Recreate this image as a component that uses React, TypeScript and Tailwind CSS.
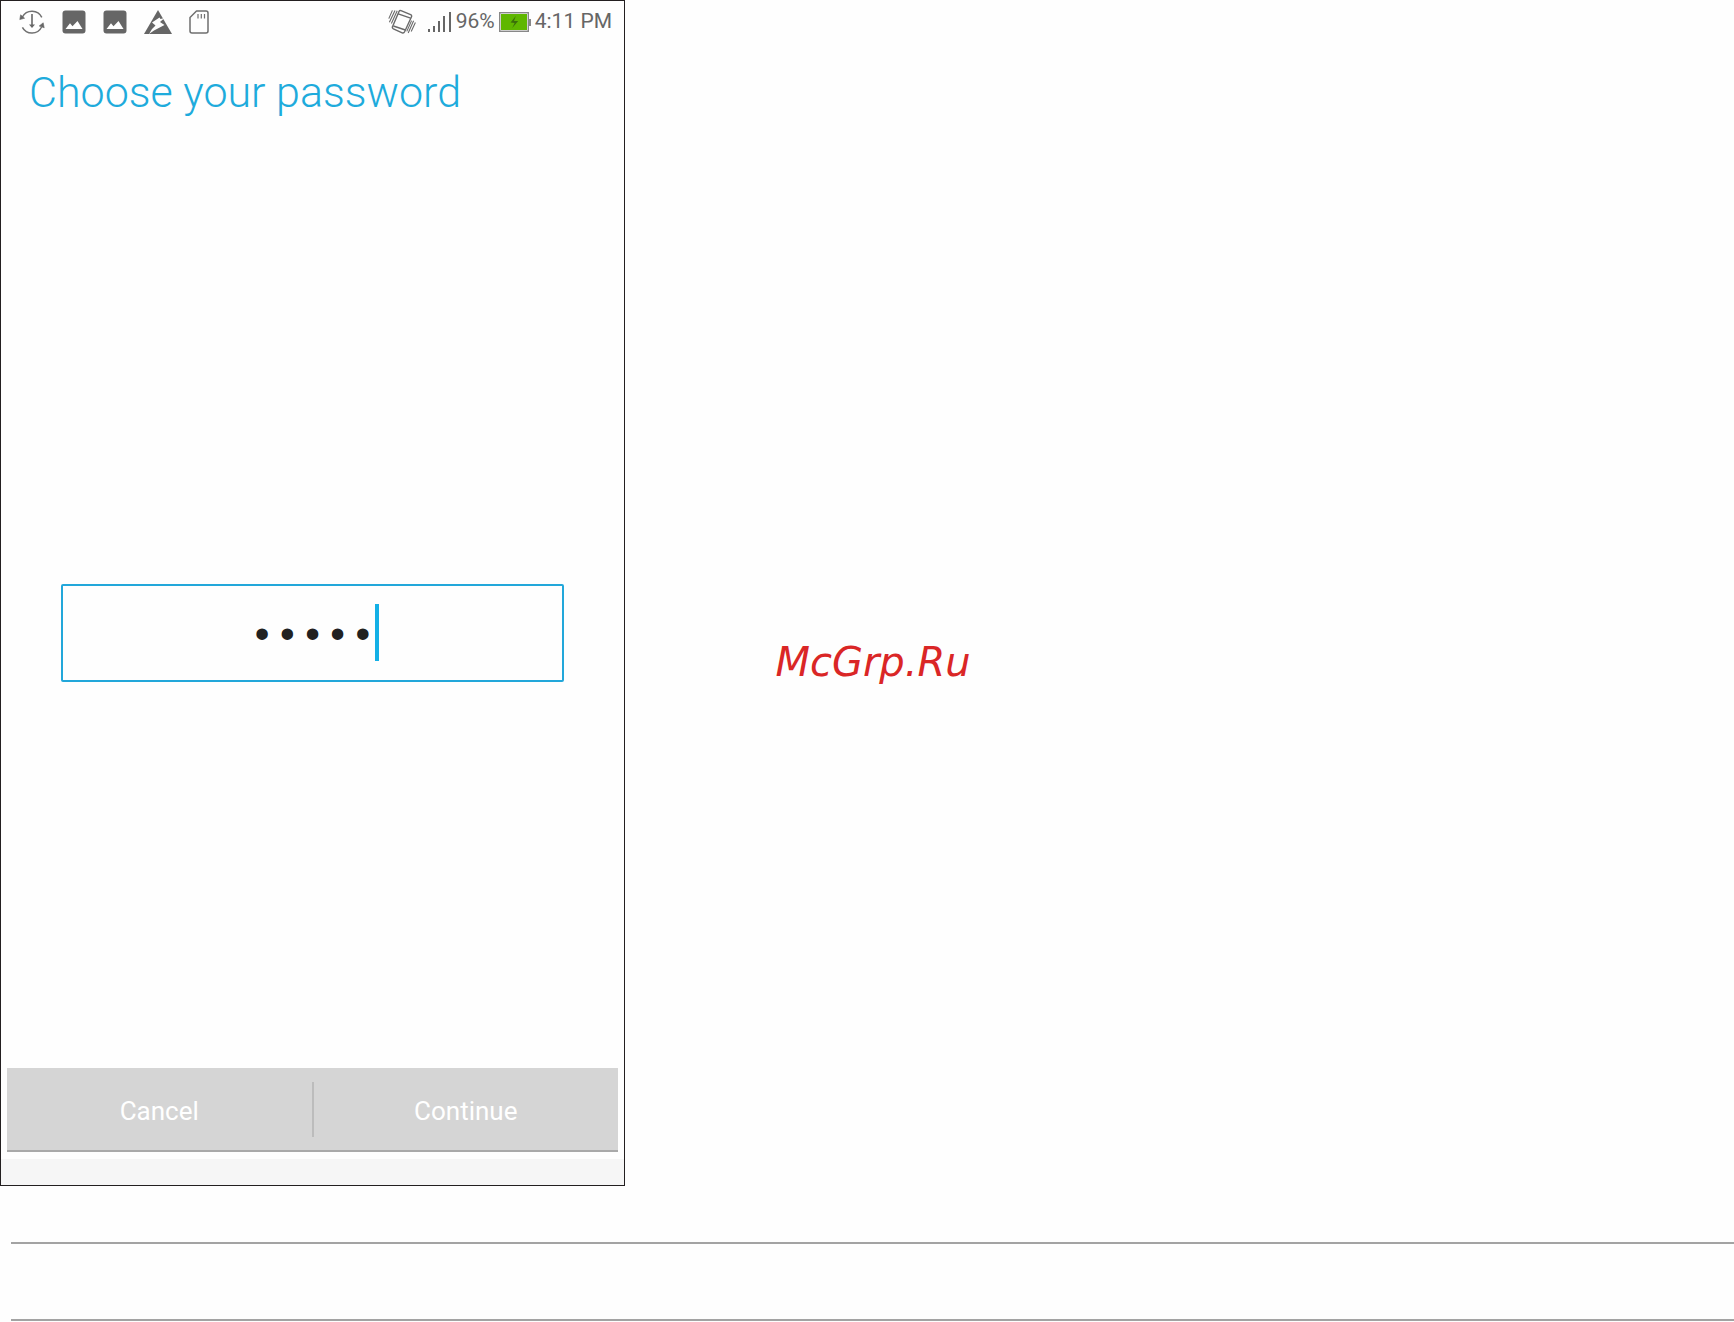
import { useState } from "react";

function UpdateIcon() {
  return (
    <svg viewBox="0 0 26 26" className="size-[26px]" fill="none" stroke="#707070" strokeWidth="1.5">
      <path d="M3.4 8A10.8 10.8 0 0 1 22.8 8.4M22.6 18A10.8 10.8 0 0 1 3.4 18.4" />
      <path d="M13 5v12" strokeWidth="1.7" />
      <path d="M10 15.6h6L13 19z" fill="#666" stroke="none" />
      <path d="M1.6 5.8 5.6 9.2.8 10.6zM24.2 13.8l1 5-5-1.8z" fill="#666" stroke="#666" strokeWidth=".6" />
    </svg>
  );
}

function PictureIcon() {
  return (
    <svg viewBox="0 0 24 24" className="size-6">
      <rect x=".5" y=".5" width="23" height="23" rx="3" fill="#666" />
      <path d="M3.5 19 8 13.2l2.5 3L15.5 11l5 8z" fill="#fefefe" />
    </svg>
  );
}

function PowerIcon() {
  return (
    <svg viewBox="0 0 28 24" className="h-6 w-7">
      <path d="M14 0 28 24H0z" fill="#666" />
      <path d="m15.5 7.5-7.5 5 3.5 3-3.5 3.5-3 5 5-3.5 10.5-5.5-4.5-3 4.5-4-4 1z" fill="#fefefe" />
    </svg>
  );
}

function SdCardIcon() {
  return (
    <svg viewBox="0 0 20 24" className="h-6 w-5" fill="none" stroke="#6f6f6f" strokeWidth="1.5">
      <path d="M7.5 1H17a2 2 0 0 1 2 2v18a2 2 0 0 1-2 2H3a2 2 0 0 1-2-2V7.5z" strokeLinejoin="round" />
      <path d="M9 4v4.5M12.3 4v4.5M15.5 4v4.5" strokeWidth="1.2" />
    </svg>
  );
}

function VibrateIcon() {
  return (
    <svg viewBox="0 0 28 26" className="h-[26px] w-7" fill="none" stroke="#6a6a6a" strokeWidth="1.4">
      <path d="M13 1.6 22.6 5.6q1.6.8.8 2.4L16.6 22.8q-.8 1.6-2.4 1L5.4 19.8q-1.6-.8-.8-2.4L11 2.4q.6-1.4 2-.8z" />
      <path d="m10.2 4.8 12.4 4.4M5.4 17l12 4" />
      <path d="M4.4 1.4.8 9.6M7 1.4 1.4 13.2M9.2 1.8 3.4 14.4M27.4 13.6l-4.2 9M25.6 11.8l-5.4 12.2M23.6 11.6l-4.8 10.8" strokeWidth="1.1" />
    </svg>
  );
}

function SignalIcon() {
  return (
    <svg viewBox="0 0 24 22" className="h-[22px] w-6" fill="#666">
      <path d="M0 18h2v3H0zM5 15h2v6H5zM10 10h2v11h-2zM15 5h2v16h-2zM21 1h2v20h-2z" />
    </svg>
  );
}

function BatteryIcon() {
  return (
    <svg viewBox="0 0 32 20" className="h-5 w-8">
      <rect x=".7" y=".7" width="28.6" height="18.6" fill="#fefefe" stroke="#888" strokeWidth="1.4" />
      <rect x="2" y="2" width="26" height="16" fill="#5fb700" />
      <rect x="30" y="7" width="2" height="7" fill="#888" />
      <path d="m16.8 4-5.2 6.6 4 .3-2.4 5 6-6.8-4.2-.2z" fill="#3b6f0a" />
    </svg>
  );
}

export default function App() {
  const [password, setPassword] = useState("12345");

  return (
    <div className="relative min-h-screen bg-[#fefefe] font-['Roboto',sans-serif]">
      <main className="flex w-[625px] max-w-full flex-col border border-[#231f20]">
        <div className="flex h-[41px] items-center justify-between pl-[18px] pr-3 text-[21px] text-[#666]">
          <div className="flex items-center gap-[17px]">
            <UpdateIcon />
            <PictureIcon />
            <PictureIcon />
            <PowerIcon />
            <SdCardIcon />
          </div>
          <div className="flex items-center gap-1">
            <div className="flex items-center gap-3">
              <VibrateIcon />
              <SignalIcon />
            </div>
            <span>96%</span>
            <BatteryIcon />
            <span>4:11 PM</span>
          </div>
        </div>

        <h1 className="px-7 pt-[23px] text-[43px] leading-[54px] font-light text-[#1eabdc]">
          Choose your password
        </h1>

        <form onSubmit={(e) => e.preventDefault()}>
          <div className="px-[60px] pt-[465px] pb-[386px]">
            <div className="relative">
              <input
                type="password"
                aria-label="Password"
                value={password}
                onChange={(e) => setPassword(e.target.value)}
                className="block h-[98px] w-full rounded-[2px] border-2 border-[#22a7da] bg-transparent pt-2 text-center font-['Liberation_Mono',monospace] text-[42px] text-[#212121] caret-transparent outline-none"
              />
              <span className="pointer-events-none absolute top-5 left-1/2 ml-[62px] h-[57px] w-1 bg-[#13b0e6]" />
            </div>
          </div>

          <div className="mx-[6px] mb-[7px] flex h-[84px] items-center border-b-2 border-[#a9a9a9] bg-[#d5d5d5] text-[26px] text-white">
            <button type="button" className="h-full flex-1 pt-1">
              Cancel
            </button>
            <div className="h-[55px] w-[2px] bg-[#bcbcbc]" />
            <button type="submit" className="h-full flex-1 pt-1">
              Continue
            </button>
          </div>
        </form>
        <div className="h-[26px] bg-[#f6f6f6]" />
      </main>

      <div className="mt-14 ml-[11px] h-[79px] border-y-2 border-[#a3a3a3]" />

      <div className="pointer-events-none absolute inset-0 flex items-center justify-center pt-[2px] pl-3">
        <span className="font-['DejaVu_Sans',sans-serif] text-[40px] text-[#da2626] italic">
          McGrp.Ru
        </span>
      </div>
    </div>
  );
}
